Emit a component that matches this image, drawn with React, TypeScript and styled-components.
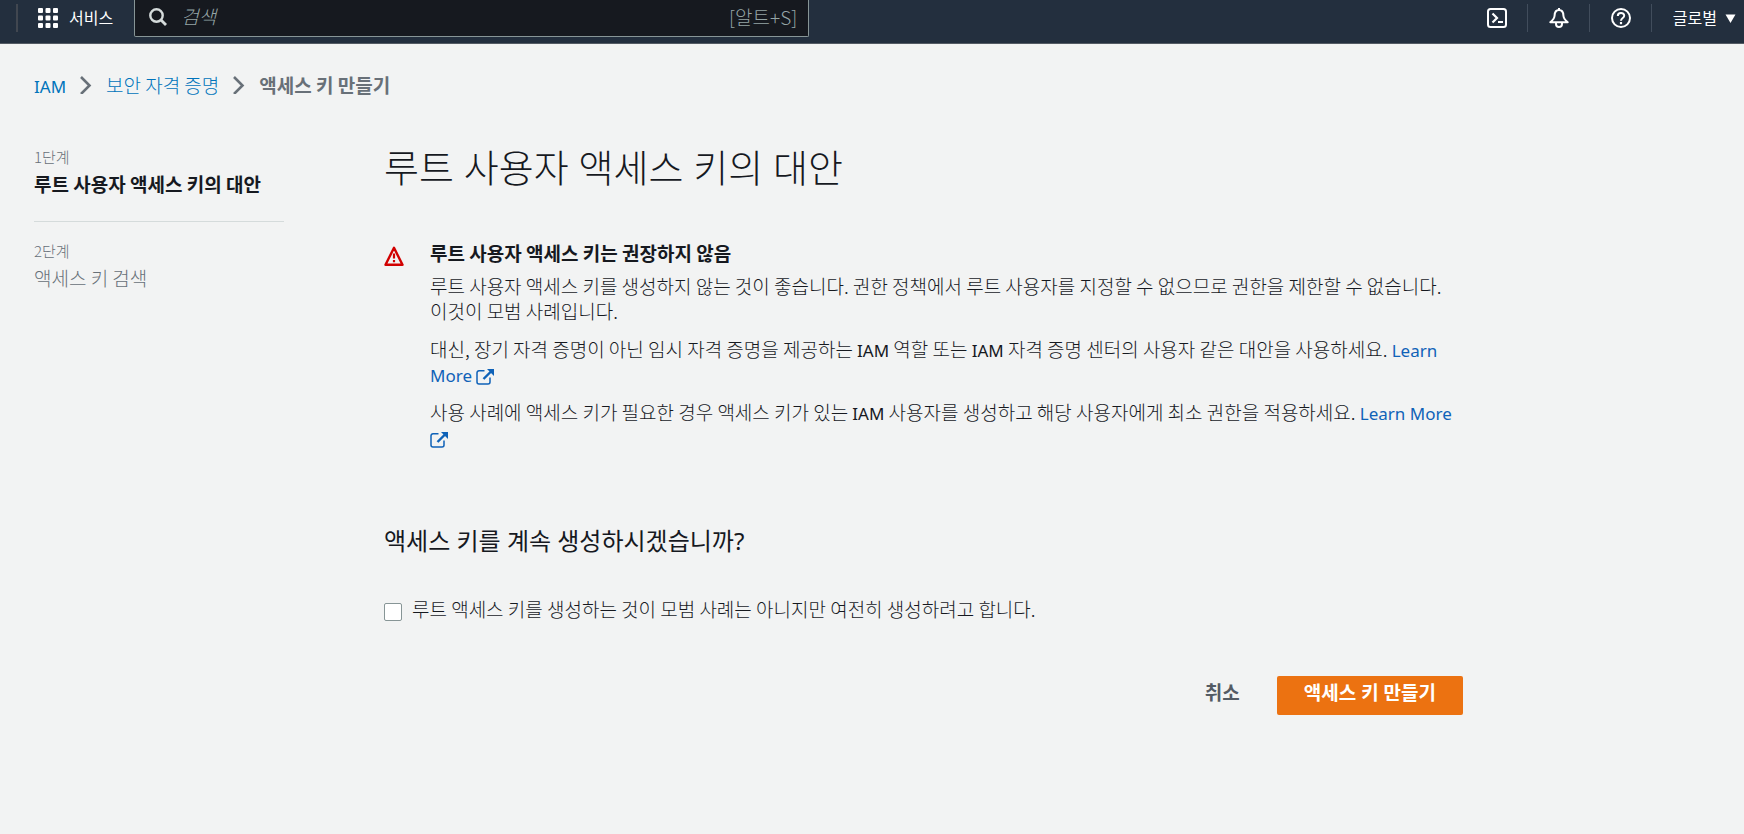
import React from "react";
import styled, { createGlobalStyle } from "styled-components";

const headingFont = `"Noto Sans", "Noto Sans CJK KR", sans-serif`;

const GlobalStyle = createGlobalStyle`
  * { box-sizing: border-box; }
  body {
    margin: 0;
    background: #f2f3f3;
    color: #16191f;
    font-family: "Noto Sans CJK KR", sans-serif;
    font-size: 19px;
    font-weight: 300;
    line-height: 25px;
    word-break: keep-all;
  }
  h1, h2, h3, p, ol { margin: 0; padding: 0; }
  button, input { font: inherit; }
`;

const TopBar = styled.header`
  display: flex;
  align-items: flex-start;
  justify-content: space-between;
  height: 44px;
  background: #232f3e;
  border-bottom: 1px solid #545b64;
  color: #fff;
`;

const BarGroup = styled.div<{ $grow?: boolean }>`
  display: flex;
  align-items: center;
  height: 36px;
  padding-left: ${(p) => (p.$grow ? "16px" : "0")};
  flex: ${(p) => (p.$grow ? "1 1 auto" : "0 0 auto")};
`;

const Divider = styled.span<{ $strong?: boolean }>`
  width: ${(p) => (p.$strong ? 2 : 1)}px;
  height: 28px;
  background: ${(p) => (p.$strong ? "#414750" : "#414d5c")};
`;

const BarButton = styled.button`
  display: flex;
  align-items: center;
  justify-content: center;
  width: 61px;
  height: 36px;
  padding: 0 0 0 2px;
  border: 0;
  background: none;
  color: #fff;
  font-size: 16px;
  font-weight: 400;
  line-height: 24px;
  white-space: nowrap;
`;

const ServicesButton = styled(BarButton)`
  gap: 11px;
  width: auto;
  padding: 0 21px 0 20px;
`;

const RegionButton = styled(BarButton)`
  gap: 8px;
  width: auto;
  padding: 0 8px 0 21px;
`;

const ButtonText = styled.span`
  padding-bottom: 2px;
`;

const SearchBox = styled.label`
  display: flex;
  align-items: center;
  flex: 0 1 675px;
  height: 37px;
  padding: 0 11px 2px 14px;
  border: 1px solid #879596;
  border-top: 0;
  border-radius: 0 0 2px 2px;
  background: #16191f;
  color: #95a5a6;
`;

const SearchInput = styled.input`
  flex: 1;
  min-width: 0;
  margin-left: 14px;
  padding: 0 0 2px;
  border: 0;
  outline: 0;
  background: none;
  color: #fff;
  &::placeholder {
    color: #95a5a6;
    opacity: 1;
    font-style: italic;
  }
`;

const Shortcut = styled.span`
  font-size: 19px;
`;

const Page = styled.div`
  padding: 26px 34px 100px;
`;

const Crumbs = styled.nav`
  display: flex;
  align-items: center;
  gap: 14px;
  height: 28px;
`;

const Link = styled.a`
  color: #0f62b8;
  text-decoration: none;
`;

const CrumbLink = styled(Link)`
  color: #0073bb;
`;

const CurrentCrumb = styled.span`
  color: #687078;
  font-weight: 700;
`;

const Latin = styled.span`
  font-family: "Noto Sans", sans-serif;
  font-size: 17px;
  font-weight: 400;
  line-height: 1;
`;

const Columns = styled.div`
  display: grid;
  grid-template-columns: 250px minmax(0, 1079px);
  column-gap: 100px;
  margin-top: 41px;
`;

const Steps = styled.ol`
  list-style: none;
  margin-top: 5px;
`;

const Step = styled.li<{ $active?: boolean }>`
  padding-bottom: 25px;
  margin-bottom: 16px;
  border-bottom: ${(p) => (p.$active ? "1px solid #d5dbdb" : "0")};
  color: ${(p) => (p.$active ? "#16191f" : "#687078")};
  font-weight: ${(p) => (p.$active ? 700 : 300)};
`;

const StepNumber = styled.div`
  margin-bottom: 2px;
  color: #687078;
  font-size: 15px;
  font-weight: 300;
`;

const Title = styled.h1`
  font-family: ${headingFont};
  font-size: 38px;
  font-weight: 300;
  line-height: 56px;
`;

const Alert = styled.section`
  display: flex;
  gap: 26px;
  margin-top: 45px;
`;

const AlertIcon = styled.svg`
  flex: none;
  margin-top: 6px;
`;

const AlertBody = styled.div`
  flex: 1;
  display: flex;
  flex-direction: column;
  gap: 13px;
`;

const AlertTitle = styled.h3`
  margin-bottom: -5px;
  font-size: 19px;
  font-weight: 700;
`;

const ExternalSvg = styled.svg`
  vertical-align: -3px;
`;

const Question = styled.h2`
  margin-top: 74px;
  font-family: ${headingFont};
  font-size: 24px;
  font-weight: 400;
  line-height: 36px;
`;

const Confirm = styled.label`
  display: flex;
  align-items: center;
  gap: 10px;
  margin-top: 37px;
`;

const Checkbox = styled.input`
  appearance: none;
  flex: none;
  width: 18px;
  height: 18px;
  margin: 6px 0 0;
  border: 1px solid #879596;
  border-radius: 2px;
  background: #fff;
  &:checked { background: #0073bb; }
`;

const Actions = styled.div`
  display: flex;
  justify-content: flex-end;
  gap: 10px;
  margin-top: 55px;
`;

const ActionButton = styled.button<{ $primary?: boolean }>`
  height: 39px;
  padding: 0 27px 4px;
  border: 0;
  border-radius: 2px;
  background: ${(p) => (p.$primary ? "#ec7211" : "transparent")};
  color: ${(p) => (p.$primary ? "#fff" : "#545b64")};
  font-family: ${headingFont};
  font-weight: 700;
`;

const Chevron = () => (
  <svg width="12" height="20" viewBox="0 0 12 20" aria-hidden="true">
    <path d="M1 3 9.5 11.5 1 20" fill="none" stroke="#687078" strokeWidth="2.6" />
  </svg>
);

const External = () => (
  <ExternalSvg width="18" height="16" viewBox="0 0 18 16" aria-hidden="true">
    <g fill="none" stroke="#0f62b8">
      <path d="M8.5 1.8H3a2 2 0 0 0-2 2V13a2 2 0 0 0 2 2h9a2 2 0 0 0 2-2V8.5" strokeWidth="1.5" />
      <path d="M7.5 10 15 2.5" strokeWidth="2.4" />
    </g>
    <path d="M11 0h7v7z" fill="#0f62b8" />
  </ExternalSvg>
);

const GridIcon = () => (
  <svg width="20" height="20" viewBox="0 0 20 20" fill="#fff" aria-hidden="true">
    {[0, 7.5, 15].map((y) =>
      [0, 7.5, 15].map((x) => <rect key={`${x}-${y}`} x={x} y={y} width="5" height="5" rx="1" />)
    )}
  </svg>
);

export default function App() {
  return (
    <>
      <GlobalStyle />
      <TopBar>
        <BarGroup $grow>
          <Divider $strong />
          <ServicesButton type="button">
            <GridIcon />
            <ButtonText>서비스</ButtonText>
          </ServicesButton>
          <SearchBox>
            <svg width="18" height="18" viewBox="0 0 18 18" fill="none" stroke="#d5dbdb" aria-hidden="true">
              <circle cx="7.5" cy="7.5" r="6.2" strokeWidth="2.4" />
              <path d="m12 12 5 5" strokeWidth="2.8" />
            </svg>
            <SearchInput type="text" placeholder="검색" aria-label="검색" />
            <Shortcut>[알트+S]</Shortcut>
          </SearchBox>
        </BarGroup>
        <BarGroup>
          <BarButton type="button" aria-label="CloudShell">
            <svg width="20" height="20" viewBox="0 0 20 20" fill="none" stroke="#fff">
              <rect x="1" y="1" width="18" height="18" rx="2.5" strokeWidth="2" />
              <path d="m5.5 5.5 4.5 4.5-4.5 4.5" strokeWidth="2.2" />
              <path d="M11 14h5" strokeWidth="2" />
            </svg>
          </BarButton>
          <Divider />
          <BarButton type="button" aria-label="알림">
            <svg width="20" height="20" viewBox="0 0 20 20" fill="none" stroke="#fff" strokeLinejoin="round">
              <path d="M10 2C7 2 5.7 4.5 5.6 7.5 5.5 10.5 4 12 1.3 14.2h17.4C16 12 14.5 10.5 14.4 7.5 14.3 4.5 13 2 10 2Z" strokeWidth="2" />
              <path d="M10 0v2" strokeWidth="2" />
              <path d="M7 15v1a3 3 0 0 0 6 0v-1" strokeWidth="2" />
            </svg>
          </BarButton>
          <Divider />
          <BarButton type="button" aria-label="도움말">
            <svg width="20" height="20" viewBox="0 0 20 20" fill="none" stroke="#fff">
              <circle cx="10" cy="10" r="9" strokeWidth="2" />
              <path d="M6.8 8C6.8 4 13.2 4 13.2 7.7c0 2.3-3.2 2.2-3.2 5" strokeWidth="2" />
              <path d="M10 14v2.2" strokeWidth="2.2" />
            </svg>
          </BarButton>
          <Divider />
          <RegionButton type="button">
            <ButtonText>글로벌</ButtonText>
            <svg width="11" height="9" viewBox="0 0 11 9" aria-hidden="true">
              <path d="M.5.5h10L5.5 9z" fill="#fff" />
            </svg>
          </RegionButton>
        </BarGroup>
      </TopBar>
      <Page>
        <Crumbs aria-label="탐색 경로">
          <CrumbLink href="#iam"><Latin>IAM</Latin></CrumbLink>
          <Chevron />
          <CrumbLink href="#credentials">보안 자격 증명</CrumbLink>
          <Chevron />
          <CurrentCrumb>액세스 키 만들기</CurrentCrumb>
        </Crumbs>
        <Columns>
          <Steps>
            <Step $active>
              <StepNumber>1단계</StepNumber>
              루트 사용자 액세스 키의 대안
            </Step>
            <Step>
              <StepNumber>2단계</StepNumber>
              액세스 키 검색
            </Step>
          </Steps>
          <main>
            <Title>루트 사용자 액세스 키의 대안</Title>
            <Alert>
              <AlertIcon width="20" height="20" viewBox="0 0 20 20" aria-hidden="true">
                <path d="M10 1.8 18.5 18.8h-17z" fill="none" stroke="#d10000" strokeWidth="2.4" strokeLinejoin="round" />
                <path d="M10 7.5v5M10 14v2.2" stroke="#d10000" strokeWidth="2.2" />
              </AlertIcon>
              <AlertBody>
                <AlertTitle>루트 사용자 액세스 키는 권장하지 않음</AlertTitle>
                <p>
                  루트 사용자 액세스 키를 생성하지 않는 것이 좋습니다. 권한 정책에서 루트 사용자를 지정할 수
                  없으므로 권한을 제한할 수 없습니다. 이것이 모범 사례입니다.
                </p>
                <p>
                  대신, 장기 자격 증명이 아닌 임시 자격 증명을 제공하는 <Latin>IAM</Latin> 역할 또는{" "}
                  <Latin>IAM</Latin> 자격 증명 센터의 사용자 같은 대안을 사용하세요.{" "}
                  <Link href="#alternatives"><Latin>Learn More</Latin> <External /></Link>
                </p>
                <p>
                  사용 사례에 액세스 키가 필요한 경우 액세스 키가 있는 <Latin>IAM</Latin> 사용자를 생성하고 해당
                  사용자에게 최소 권한을 적용하세요.{" "}
                  <Link href="#least-privilege"><Latin>Learn More</Latin> <External /></Link>
                </p>
              </AlertBody>
            </Alert>
            <Question>액세스 키를 계속 생성하시겠습니까?</Question>
            <Confirm>
              <Checkbox type="checkbox" />
              루트 액세스 키를 생성하는 것이 모범 사례는 아니지만 여전히 생성하려고 합니다.
            </Confirm>
            <Actions>
              <ActionButton type="button">취소</ActionButton>
              <ActionButton type="button" $primary>액세스 키 만들기</ActionButton>
            </Actions>
          </main>
        </Columns>
      </Page>
    </>
  );
}
